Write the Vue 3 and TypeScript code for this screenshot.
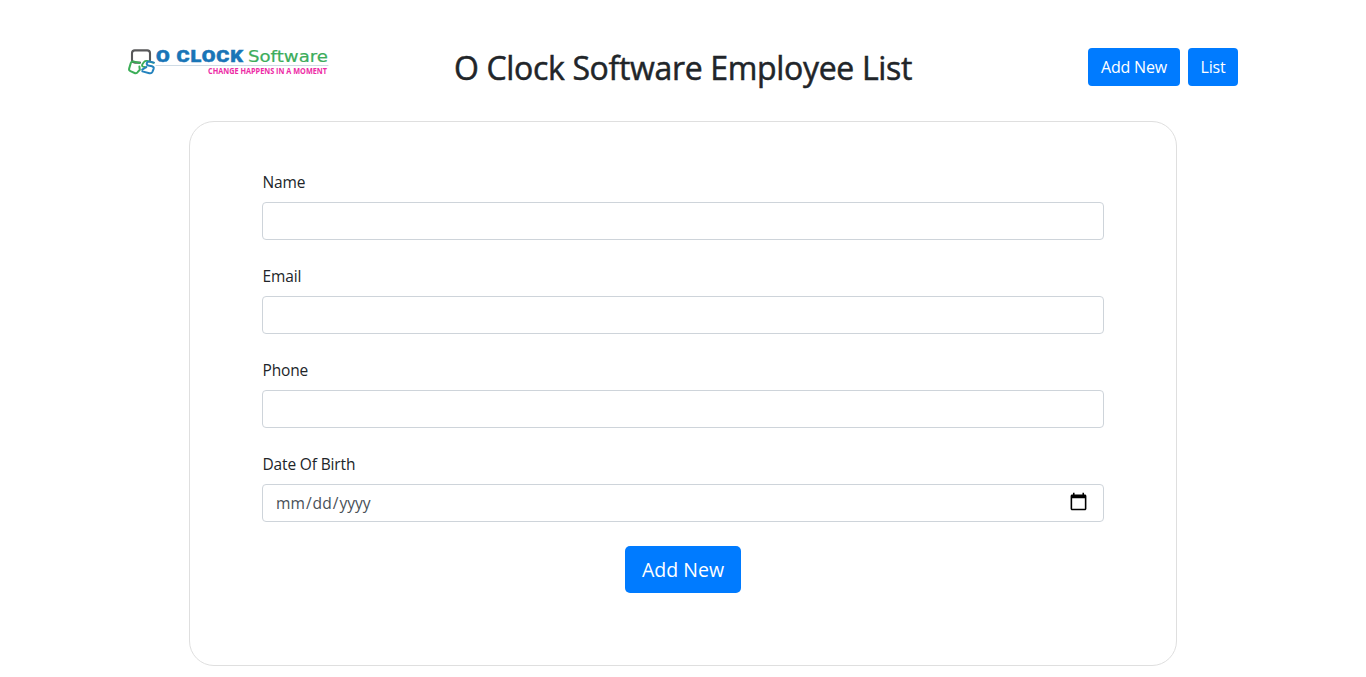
<script setup lang="ts">
import { reactive } from 'vue'

interface Field {
  key: string
  label: string
  type: string
}

const fields: Field[] = [
  { key: 'name', label: 'Name', type: 'text' },
  { key: 'email', label: 'Email', type: 'email' },
  { key: 'phone', label: 'Phone', type: 'text' },
  { key: 'dob', label: 'Date Of Birth', type: 'date' },
]

const employee = reactive<Record<string, string>>({ name: '', email: '', phone: '', dob: '' })
</script>

<template>
  <div class="page">
    <header class="header">
      <svg class="logo" width="202" height="30" viewBox="0 0 202 30" role="img" aria-label="O Clock Software">
        <g fill="none" stroke-linejoin="round" stroke-linecap="round">
          <path d="M28 17.5H200" stroke="#cfdbe5" stroke-width="1" />
          <path d="M4 12V5.2Q4 2.4 6.8 2.4H19.2Q22 2.4 22 5.2V12.2M4 12Q4.2 14.6 7 14.6H12" stroke="#58585a" stroke-width="2.1" />
          <path d="M11.6 15L5.2 13.4Q3.4 13.2 2.8 15L1.2 20.4Q.6 22.4 2.4 23.2L6.6 25Q8 25.6 9.4 24.4L11.8 21.8L11.4 18.6" stroke="#3cae58" stroke-width="2" />
          <path d="M25.6 14.8L19 12.9Q17.2 12.6 16 14L14.4 16.2Q13.4 18 15.2 18.6L18 19.4" stroke="#3cae58" stroke-width="1.9" />
          <path d="M26 14.6L21.4 13.4Q19.4 13.2 18.8 15Q18.4 17 20.4 17.5L24 18.2Q26.2 19 25.6 20.8L24.4 23.8Q23.6 25.6 21.4 25.2L14.4 23.4M14.2 21.6L18.4 19" stroke="#2382bd" stroke-width="2" />
        </g>
        <text class="logo-name" x="28" y="14" textLength="88" lengthAdjust="spacingAndGlyphs">O CLOCK</text>
        <text class="logo-soft" x="120" y="14" textLength="80" lengthAdjust="spacingAndGlyphs">Software</text>
        <text class="logo-tag" x="80" y="26" textLength="119" lengthAdjust="spacingAndGlyphs">CHANGE HAPPENS IN A MOMENT</text>
      </svg>
      <h2 class="title">O Clock Software Employee List</h2>
      <nav class="actions">
        <button type="button" class="btn btn-add">Add New</button>
        <button type="button" class="btn btn-list">List</button>
      </nav>
    </header>
    <form class="card" @submit.prevent>
      <div v-for="field in fields" :key="field.key" class="group">
        <label :for="field.key">{{ field.label }}</label>
        <input :id="field.key" v-model="employee[field.key]" :type="field.type" />
      </div>
      <button type="submit" class="btn btn-submit">Add New</button>
    </form>
  </div>
</template>

<style>
body {
  margin: 0;
  background: #fff;
  overflow: hidden;
}
</style>

<style scoped>
.page,
.page *,
.page *::before {
  box-sizing: border-box;
}
.page {
  width: 1110px;
  margin: 0 auto;
  padding-top: 48px;
  font-family: "Open Sans", "Noto Sans", sans-serif;
  font-size: 16px;
  line-height: 24px;
  color: #212529;
}
.header {
  display: grid;
  grid-template-columns: 1fr auto 1fr;
  align-items: start;
  height: 73px;
}
.logo {
  display: block;
  overflow: visible;
}
.logo-name {
  font: 900 17px Roboto, sans-serif;
  letter-spacing: 0.8px;
  fill: #1975b7;
  stroke: #1975b7;
  stroke-width: 0.5px;
}
.logo-soft {
  font: 400 16.5px "DejaVu Sans", sans-serif;
  fill: #3cad5b;
  stroke: #3cad5b;
  stroke-width: 0.2px;
}
.logo-tag {
  font: 700 8.6px "Open Sans", sans-serif;
  fill: #ed2ba5;
}
.title {
  margin: 0;
  padding-top: 1px;
  font-size: 32px;
  line-height: 38px;
  font-weight: 500;
  letter-spacing: -0.33px;
  white-space: nowrap;
  -webkit-text-stroke: 0.5px #212529;
}
.actions {
  display: flex;
  justify-content: flex-end;
  gap: 8px;
}
.btn {
  display: block;
  height: 38px;
  padding: 0;
  border: 0;
  border-radius: 4px;
  background: #007bff;
  color: #fff;
  font: 400 16px/24px "Open Sans", "Noto Sans", sans-serif;
  letter-spacing: -0.2px;
}
.btn-add {
  width: 92px;
}
.btn-list {
  width: 50px;
}
.btn-submit {
  width: 116px;
  height: 47px;
  margin: 0 auto;
  padding-top: 1px;
  border-radius: 5px;
  font-size: 19.5px;
  letter-spacing: 0;
}
.card {
  width: 988px;
  height: 545px;
  margin: 0 auto;
  padding: 48px 72px;
  border: 1px solid #dfdfdf;
  border-radius: 25px;
}
.group {
  margin-bottom: 24px;
}
label {
  display: block;
  margin-bottom: 8px;
  padding-left: 0.5px;
  font-size: 15.5px;
  line-height: 24px;
  letter-spacing: -0.15px;
}
input {
  display: block;
  width: 100%;
  height: 38px;
  padding: 6px 12px;
  border: 1px solid #ced4da;
  border-radius: 4px;
  background: #fff;
  color: #495057;
  font: 400 15.6px/24px "Open Sans", "Noto Sans", sans-serif;
  outline: none;
}
input::-webkit-calendar-picker-indicator {
  width: 19px;
  height: 19px;
  margin: 0 3px 3px 0;
  padding: 0;
  background-size: 19px 19px;
}
</style>
